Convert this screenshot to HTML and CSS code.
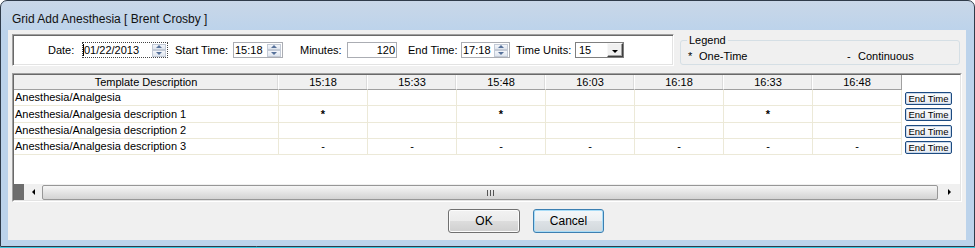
FILE: index.html
```html
<!DOCTYPE html>
<html lang="en">
<head>
    <meta charset="UTF-8">
    <title>Grid Add Anesthesia</title>
    <link rel="stylesheet" href="styles.css">
</head>
<body>
    <div class="window">
        <div class="titlebar">Grid Add Anesthesia [ Brent Crosby ]</div>
        <div class="client">
            <div class="toprow">
                <div class="params">
                    <span class="lbl w34">Date:</span>
                    <div class="field w86 focused">
                        <span class="caret"></span>
                        <span class="val">01/22/2013</span>
                        <span class="spin"><span class="up"></span><span class="down"></span></span>
                    </div>
                    <span class="lbl w58 ml7">Start Time:</span>
                    <div class="field w50">
                        <span class="val">15:18</span>
                        <span class="spin"><span class="up"></span><span class="down"></span></span>
                    </div>
                    <span class="lbl w47 ml17">Minutes:</span>
                    <div class="field w50 right">
                        <span class="val">120</span>
                    </div>
                    <span class="lbl w53 ml11">End Time:</span>
                    <div class="field w49">
                        <span class="val">17:18</span>
                        <span class="spin"><span class="up"></span><span class="down"></span></span>
                    </div>
                    <span class="lbl w59 ml6">Time Units:</span>
                    <div class="field combo w49">
                        <span class="val">15</span>
                        <span class="dropbtn"><span class="arrow"></span></span>
                    </div>
                </div>
                <fieldset class="legendbox">
                    <legend>Legend</legend>
                    <div class="legendrow">
                        <span class="legenditem first"><span class="sym">*</span>One-Time</span>
                        <span class="legenditem"><span class="sym">-</span>Continuous</span>
                    </div>
                </fieldset>
            </div>

            <div class="grid">
                <div class="gridinner">
                    <table class="sheet">
                        <tr>
                            <th class="desc">Template Description</th>
                            <th>15:18</th>
                            <th>15:33</th>
                            <th>15:48</th>
                            <th>16:03</th>
                            <th>16:18</th>
                            <th>16:33</th>
                            <th class="lastcol">16:48</th>
                            <th class="btncol"></th>
                        </tr>
                        <tr>
                            <td class="desc">Anesthesia/Analgesia</td>
                            <td></td><td></td><td></td><td></td><td></td><td></td><td></td>
                            <td class="btncol"><button class="endbtn">End Time</button></td>
                        </tr>
                        <tr>
                            <td class="desc">Anesthesia/Analgesia description 1</td>
                            <td class="star">*</td><td></td><td class="star">*</td><td></td><td></td><td class="star">*</td><td></td>
                            <td class="btncol"><button class="endbtn">End Time</button></td>
                        </tr>
                        <tr>
                            <td class="desc">Anesthesia/Analgesia description 2</td>
                            <td></td><td></td><td></td><td></td><td></td><td></td><td></td>
                            <td class="btncol"><button class="endbtn">End Time</button></td>
                        </tr>
                        <tr>
                            <td class="desc">Anesthesia/Analgesia description 3</td>
                            <td>-</td><td>-</td><td>-</td><td>-</td><td>-</td><td>-</td><td>-</td>
                            <td class="btncol"><button class="endbtn">End Time</button></td>
                        </tr>
                    </table>
                    <div class="filler"></div>
                    <div class="hscroll">
                        <span class="corner"></span>
                        <span class="sbbtn left"><span class="tri-left"></span></span>
                        <span class="thumb"><span class="grip"></span></span>
                        <span class="sbbtn right"><span class="tri-right"></span></span>
                    </div>
                </div>
            </div>

            <div class="actions">
                <button class="dlgbtn ok">OK</button>
                <button class="dlgbtn cancel">Cancel</button>
            </div>
        </div>
    </div>
    <div class="desktop"></div>
</body>
</html>
```

FILE: styles.css
```css
* {
    margin: 0px;
    padding: 0px;
    box-sizing: border-box;
}
html, body {
    width: 975px;
    height: 248px;
    overflow: hidden;
    background-color: #fff;
}
body {
    font-family: "Liberation Sans", Arial, sans-serif;
    font-size: 11px;
    color: #000;
}
.window {
    height: 247px;
    border: 1px solid #2f3b4a;
    border-radius: 7px 7px 0 0;
    background: linear-gradient(#c9d7e8, #bcd3eb 30px);
    padding: 0 8px 6px 7px;
    display: flex;
    flex-direction: column;
}
.titlebar {
    height: 29px;
    padding: 10px 0 0 4px;
    line-height: 16px;
    font-size: 12px;
    color: #111;
}
.client {
    height: 210px;
    background-color: #f0f0f0;
    padding: 4px 4px 0 4px;
}
.desktop {
    height: 1px;
    background-color: #38c8e2;
}

/* top parameter panel */
.toprow {
    display: flex;
    align-items: flex-start;
}
.params {
    width: 662px;
    height: 32px;
    display: flex;
    align-items: center;
    background-color: #fff;
    border: 1px solid;
    border-color: #a0a0a0 #fff #fff #a0a0a0;
    box-shadow: inset 1px 1px 0 #696969, inset -1px -1px 0 #e3e3e3;
    padding-left: 35px;
}
.lbl {
    flex: none;
    white-space: nowrap;
}
.w34 { width: 34px; }
.w47 { width: 47px; }
.w49 { width: 49px; }
.w50 { width: 50px; }
.w53 { width: 53px; }
.w58 { width: 58px; }
.w59 { width: 59px; }
.w86 { width: 86px; }
.ml6 { margin-left: 6px; }
.ml7 { margin-left: 7px; }
.ml11 { margin-left: 11px; }
.ml17 { margin-left: 17px; }

.field {
    flex: none;
    height: 16px;
    display: flex;
    align-items: center;
    border: 1px solid #abadb3;
    background-color: #fff;
    position: relative;
}
.field .val {
    flex: 1;
    padding-left: 1px;
    line-height: 14px;
}
.field.right .val {
    text-align: right;
    padding-right: 1px;
}
.field.focused {
    border: 1px dotted #444;
}
.caret {
    position: absolute;
    left: 0px;
    top: 1px;
    width: 1px;
    height: 12px;
    background-color: #000;
}
.spin {
    flex: none;
    width: 14px;
    height: 13px;
    margin-right: 1px;
    display: flex;
    flex-direction: column;
}
.spin span {
    flex: 1;
    display: flex;
    align-items: center;
    justify-content: center;
    background: linear-gradient(#f4f6fa, #dfe5ee);
    border: 1px solid #c3cad6;
}
.spin span::after {
    content: "";
    border-left: 3px solid transparent;
    border-right: 3px solid transparent;
}
.spin .up::after {
    border-bottom: 3px solid #56719a;
}
.spin .down::after {
    border-top: 3px solid #56719a;
}
.combo {
    border-color: #7f7f7f;
}
.combo .val {
    padding-left: 3px;
}
.dropbtn {
    flex: none;
    width: 16px;
    height: 14px;
    display: flex;
    align-items: flex-end;
    justify-content: center;
    padding-bottom: 3px;
    background-color: #f0f0f0;
    border: 1px solid;
    border-color: #f8f8f8 #404040 #404040 #f8f8f8;
    box-shadow: inset -1px -1px 0 #a0a0a0;
}
.dropbtn .arrow {
    border-left: 3px solid transparent;
    border-right: 3px solid transparent;
    border-top: 3px solid #000;
}

/* legend */
.legendbox {
    width: 280px;
    margin-left: 6px;
    border: 1px solid #d5dfe5;
    border-radius: 3px;
    padding: 4px 6px 1px 7px;
}
.legendbox legend {
    padding: 0 2px;
    margin-left: -1px;
    line-height: 12px;
}
.legendrow {
    display: flex;
    line-height: 13px;
}
.legenditem.first {
    width: 159px;
}
.legenditem .sym {
    display: inline-block;
    width: 11px;
}

/* grid */
.grid {
    margin-top: 7px;
    height: 129px;
    border: 1px solid;
    border-color: #a0a0a0 #fff #fff #a0a0a0;
}
.gridinner {
    height: 100%;
    display: flex;
    flex-direction: column;
    background-color: #fff;
    border: 1px solid;
    border-color: #696969 #e3e3e3 #e3e3e3 #696969;
}
.sheet {
    border-collapse: separate;
    border-spacing: 0;
    table-layout: fixed;
    width: 946px;
}
.sheet th {
    width: 89px;
    height: 15px;
    padding: 0;
    font-weight: normal;
    line-height: 14px;
    background-color: #f0f0f0;
    border-bottom: 1px solid #a0a0a0;
    border-right: 1px solid #fff;
    box-shadow: inset -1px 0 0 #dcdcdc;
    text-align: center;
}
.sheet th.desc {
    width: 265px;
}
.sheet th.lastcol {
    border-right: 1px solid #a0a0a0;
    box-shadow: none;
}
.sheet th.btncol {
    width: 58px;
    background-color: #fff;
    border: 0;
    box-shadow: none;
}
.sheet td {
    height: 15px;
    padding: 0;
    line-height: 15px;
    text-align: center;
    border-bottom: 1px solid #ece9d8;
    border-right: 1px solid #ece9d8;
    white-space: nowrap;
    overflow: hidden;
}
.sheet td.desc {
    text-align: left;
    padding-left: 1px;
}
.sheet td.star {
    font-weight: bold;
    line-height: 16px;
}
.sheet td.btncol {
    border: 0;
    text-align: left;
    vertical-align: top;
    padding: 2px 0 0 3px;
}
.endbtn {
    display: block;
    width: 47px;
    height: 13px;
    padding: 0;
    font-family: "Liberation Sans", Arial, sans-serif;
    font-size: 9.5px;
    line-height: 11px;
    text-align: center;
    white-space: nowrap;
    color: #000;
    border: 1px solid #1c4a80;
    border-radius: 2px;
    background: linear-gradient(#fdfdfd, #e6eaf1);
    box-shadow: inset 0 0 0 1px #c9d8ea;
}
.filler {
    flex: 1;
}
.hscroll {
    height: 16px;
    display: flex;
    background-color: #f0f0f0;
}
.corner {
    width: 10px;
    background-color: #6d6d6d;
}
.sbbtn {
    display: flex;
    align-items: center;
    justify-content: center;
}
.sbbtn.left {
    width: 18px;
}
.sbbtn.right {
    width: 22px;
}
.tri-left {
    border-top: 3px solid transparent;
    border-bottom: 3px solid transparent;
    border-right: 3px solid #000;
}
.tri-right {
    border-top: 3px solid transparent;
    border-bottom: 3px solid transparent;
    border-left: 3px solid #000;
}
.thumb {
    flex: 1;
    margin: 1px 0 0 0;
    display: flex;
    align-items: center;
    justify-content: center;
    border: 1px solid #979797;
    border-radius: 2px;
    background: linear-gradient(#f6f6f6, #e4e4e4 50%, #d3d3d3);
}
.grip {
    width: 7px;
    height: 6px;
    border-left: 1px solid #555;
    border-right: 1px solid #555;
    background: linear-gradient(90deg, transparent 2px, #555 2px, #555 3px, transparent 3px);
}

/* dialog buttons */
.actions {
    display: flex;
    margin-top: 7px;
    padding-left: 436px;
    gap: 13px;
}
.dlgbtn {
    height: 24px;
    font-family: "Liberation Sans", Arial, sans-serif;
    font-size: 12px;
    color: #000;
    border: 1px solid #707070;
    border-radius: 3px;
    background: linear-gradient(#f2f2f2, #ebebeb 50%, #dddddd 50%, #cfcfcf);
    box-shadow: inset 0 0 0 1px #fcfcfc;
}
.dlgbtn.ok {
    width: 72px;
}
.dlgbtn.cancel {
    width: 71px;
    border-color: #3c7fb1;
    box-shadow: inset 0 0 0 1px #a8dcf7;
    background: linear-gradient(#f4f7f9, #ebeff2 50%, #dde2e6 50%, #d2d8dc);
}
```
